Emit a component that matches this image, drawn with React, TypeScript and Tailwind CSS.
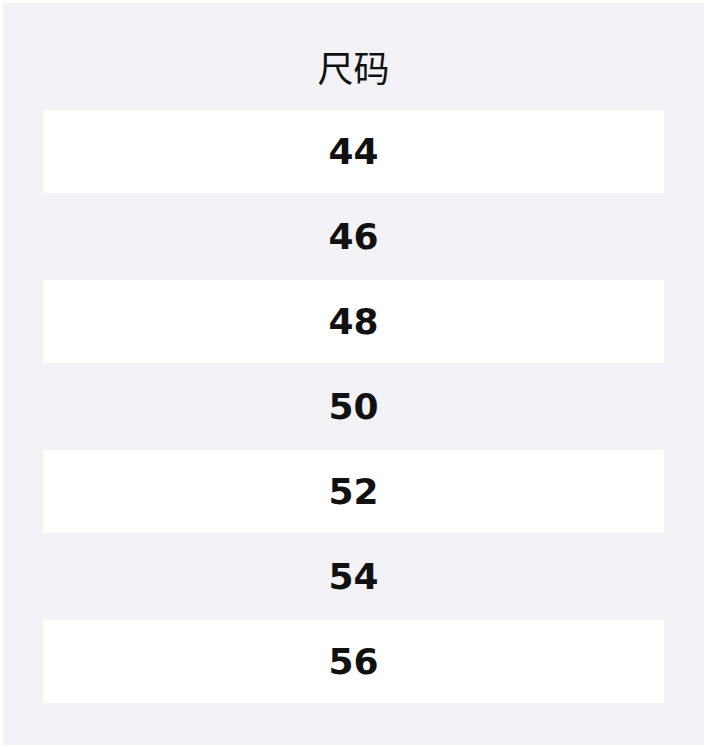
const sizes = ['44', '46', '48', '50', '52', '54', '56'];

export default function App() {
  return (
    <div className="bg-white p-[3px]" style={{ fontFamily: '"DejaVu Sans", "Noto Sans CJK SC", sans-serif' }}>
      <div className="bg-[#f2f2f7] h-[742px] px-[40px] pt-[40px]">
        {/* 标题 */}
        <div className="h-[54px] mb-[13px] flex items-center justify-center text-[36px] text-[#111] font-normal">
          尺码
        </div>

        {/* 尺码列表 */}
        <div className="flex flex-col">
          {sizes.map((s, i) => (
            <div
              key={s}
              className={
                i % 2 === 0
                  ? 'h-[83px] bg-white flex items-center justify-center text-[36px] font-bold text-[#111]'
                  : 'h-[87px] flex items-center justify-center text-[36px] font-bold text-[#111]'
              }
            >
              {s}
            </div>
          ))}
        </div>
      </div>
    </div>
  );
}
